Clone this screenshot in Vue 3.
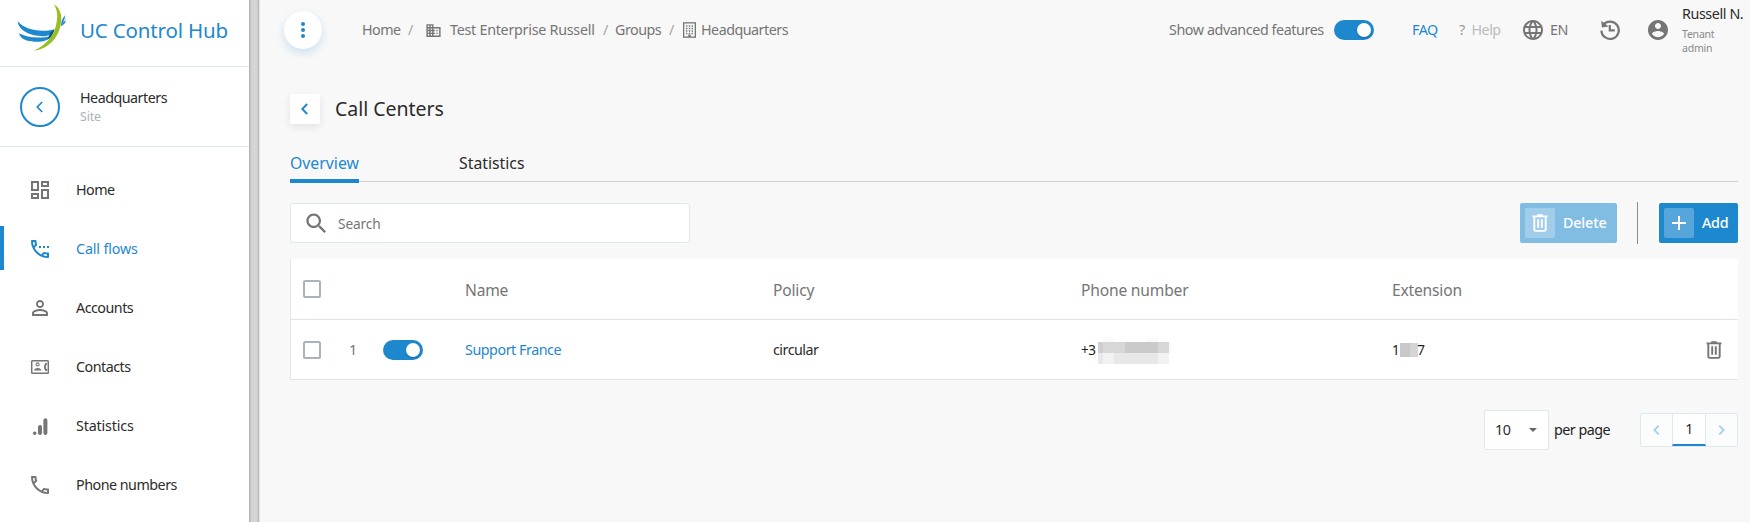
<script setup>
const phone =
  'M6.54 5c.06.89.21 1.76.45 2.59l-1.2 1.2c-.41-1.2-.67-2.47-.76-3.79h1.51m9.86 12.02c.85.24 1.72.39 2.6.45v1.49c-1.32-.09-2.59-.35-3.8-.75l1.2-1.19M7.5 3H4c-.55 0-1 .45-1 1 0 9.39 7.61 17 17 17 .55 0 1-.45 1-1v-3.49c0-.55-.45-1-1-1-1.24 0-2.45-.2-3.57-.57-.1-.04-.21-.05-.31-.05-.26 0-.51.1-.71.29l-2.2 2.2c-2.83-1.45-5.15-3.76-6.59-6.59l2.2-2.2c.28-.28.36-.67.25-1.02C8.7 6.45 8.5 5.25 8.5 4c0-.55-.45-1-1-1z'
const nav = [
  { label: 'Home', path: 'M19 5v2h-4V5h4M9 5v6H5V5h4m10 8v6h-4v-6h4M9 17v2H5v-2h4M21 3h-8v6h8V3zM11 3H3v10h8V3zm10 8h-8v10h8V11zm-10 4H3v6h8v-6z' },
  { label: 'Call flows', path: phone + 'M11 9h2v2h-2zM15 9h2v2h-2zM19 9h2v2h-2z', active: true },
  { label: 'Accounts', path: 'M12 5.9c1.16 0 2.1.94 2.1 2.1s-.94 2.1-2.1 2.1S9.9 9.16 9.9 8s.94-2.1 2.1-2.1m0 9c2.97 0 6.1 1.46 6.1 2.1v1.1H5.9V17c0-.64 3.13-2.1 6.1-2.1M12 4C9.79 4 8 5.79 8 8s1.79 4 4 4 4-1.79 4-4-1.79-4-4-4zm0 9c-2.67 0-8 1.34-8 4v3h16v-3c0-2.66-5.33-4-8-4z' },
  { label: 'Contacts', contact: true },
  { label: 'Statistics', wide: true, path: 'M6.7 17.4a1.8 1.8 0 1 0 .01 0zM10 13a2 2 0 0 1 4 0v6a2 2 0 0 1-4 0zM15.4 6.2a2 2 0 0 1 4 0V19a2 2 0 0 1-4 0z' },
  { label: 'Phone numbers', path: phone },
]
const domain =
  'M12 7V3H2v18h20V7H12zM6 19H4v-2h2v2zm0-4H4v-2h2v2zm0-4H4V9h2v2zm0-4H4V5h2v2zm4 12H8v-2h2v2zm0-4H8v-2h2v2zm0-4H8V9h2v2zm0-4H8V5h2v2zm10 12h-8v-2h2v-2h-2v-2h2v-2h-2V9h8v10zm-2-8h-2v2h2v-2zm0 4h-2v2h2v-2z'
const globe =
  'M11.99 2C6.47 2 2 6.48 2 12s4.47 10 9.99 10C17.52 22 22 17.52 22 12S17.52 2 11.99 2zm6.93 6h-2.95c-.32-1.25-.78-2.45-1.38-3.56 1.84.63 3.37 1.91 4.33 3.56zM12 4.04c.83 1.2 1.48 2.53 1.91 3.96h-3.82c.43-1.43 1.08-2.76 1.91-3.96zM4.26 14C4.1 13.36 4 12.69 4 12s.1-1.36.26-2h3.38c-.08.66-.14 1.32-.14 2s.06 1.34.14 2H4.26zm.82 2h2.95c.32 1.25.78 2.45 1.38 3.56-1.84-.63-3.37-1.9-4.33-3.56zm2.95-8H5.08c.96-1.66 2.49-2.93 4.33-3.56C8.81 5.55 8.35 6.75 8.03 8zM12 19.96c-.83-1.2-1.48-2.53-1.91-3.96h3.82c-.43 1.43-1.08 2.76-1.91 3.96zM14.34 14H9.66c-.09-.66-.16-1.32-.16-2s.07-1.35.16-2h4.68c.09.65.16 1.32.16 2s-.07 1.34-.16 2zm.25 5.56c.6-1.11 1.06-2.31 1.38-3.56h2.95c-.96 1.65-2.49 2.93-4.33 3.56zM16.36 14c.08-.66.14-1.32.14-2s-.06-1.34-.14-2h3.38c.16.64.26 1.31.26 2s-.1 1.36-.26 2h-3.38z'
const account =
  'M12 2C6.48 2 2 6.48 2 12s4.48 10 10 10 10-4.48 10-10S17.52 2 12 2zm0 3c1.66 0 3 1.34 3 3s-1.34 3-3 3-3-1.34-3-3 1.34-3 3-3zm0 14.2c-2.5 0-4.71-1.28-6-3.22.03-1.99 4-3.08 6-3.08 1.99 0 5.97 1.09 6 3.08-1.29 1.94-3.5 3.22-6 3.22z'
const search =
  'M15.5 14h-.79l-.28-.27C15.41 12.59 16 11.11 16 9.5 16 5.91 13.09 3 9.5 3S3 5.91 3 9.5 5.91 16 9.5 16c1.61 0 3.09-.59 4.23-1.57l.27.28v.79l5 4.99L20.49 19l-4.99-5zm-6 0C7.01 14 5 11.99 5 9.5S7.01 5 9.5 5 14 7.01 14 9.5 11.99 14 9.5 14z'
</script>

<template>
  <div class="app">
    <aside class="side">
      <div class="brand">
        <svg class="logo" viewBox="48 10 156 148">
          <path fill="#1e88cf" d="M53 65C72 88 118 101 163 89C161 101 152 107 139 109C102 113 56 97 53 65Z" />
          <path fill="#1e88cf" d="M57 101C82 115 122 118 157 108C148 121 129 127 104 126C81 125 61 119 57 101Z" />
          <path fill="#1e88cf" d="M195 47L194 58L183 80C183 67 187 57 195 47ZM198 62C197 70 191 76 183 80L190 67Z" />
          <path fill="#15507c" d="M163 89C161 103 154 113 143 119L151 99Z" />
          <path fill="#97bf1f" d="M161 14C181 24 188 49 182 77C174 114 147 148 102 153C136 137 158 113 167 81C175 53 173 30 161 14Z" />
        </svg>
        <span class="brand-name">UC Control Hub</span>
      </div>
      <div class="site">
        <span class="back-ring">
          <svg width="8" height="12" viewBox="0 0 8 12"><path d="M6.2 1L1.3 6L6.2 11" fill="none" stroke="#1e88cf" stroke-width="1.7" /></svg>
        </span>
        <div class="site-text"><div class="site-name">Headquarters</div><div class="site-kind">Site</div></div>
      </div>
      <nav class="nav">
        <a v-for="n in nav" :key="n.label" class="nav-item" :class="{ active: n.active, wide: n.wide }">
          <svg v-if="n.contact" width="24" height="24" viewBox="0 0 24 24">
            <rect x="3.7" y="5.7" width="16.6" height="12.6" rx=".8" fill="none" stroke="currentColor" stroke-width="1.5" />
            <circle cx="9.6" cy="9.4" r="1.5" fill="none" stroke="currentColor" stroke-width="1.1" />
            <path d="M6 15.6c0-3.4 7.4-3.4 7.4 0zM18.6 7.8l-1.2.1a7 7 0 0 0 0 8.1h1.4l.5-1.4-1.2-1a5 5 0 0 1 0-3.2l1.1-1.1z" fill="currentColor" />
          </svg>
          <svg v-else width="24" height="24" viewBox="0 0 24 24"><path :d="n.path" fill="currentColor" /></svg>
          <span>{{ n.label }}</span>
        </a>
      </nav>
    </aside>
    <div class="gutter"></div>
    <main class="main">
      <header class="top">
        <span class="menu"><svg width="6" height="18" viewBox="0 0 6 18"><circle cx="3" cy="3" r="2" /><circle cx="3" cy="9" r="2" /><circle cx="3" cy="15" r="2" /></svg></span>
        <span class="c-home">Home</span>
        <span class="slash">/</span>
        <svg class="c-domain" width="17" height="17" viewBox="0 0 24 24"><path :d="domain" fill="currentColor" /></svg>
        <span class="c-ent">Test Enterprise Russell</span>
        <span class="slash">/</span>
        <span class="c-groups">Groups</span>
        <span class="slash">/</span>
        <svg class="c-build" width="13" height="16" viewBox="0 0 13 16">
          <rect x=".65" y=".85" width="11.7" height="14.3" fill="none" stroke="currentColor" stroke-width="1.3" />
          <path d="M3 4h7M3 6.5h7M3 9h7M3 11.5h7" stroke="currentColor" stroke-width="1.3" stroke-dasharray="1.4 1.4" />
          <path d="M5.3 12.5h2.4V15H5.3z" fill="currentColor" />
        </svg>
        <span class="c-hq">Headquarters</span>
        <div class="right">
          <span class="r-adv">Show advanced features</span>
          <span class="toggle"><i></i></span>
          <span class="r-faq">FAQ</span>
          <span class="r-q">?</span>
          <span class="r-help">Help</span>
          <svg width="24" height="24" viewBox="0 0 24 24"><path :d="globe" fill="currentColor" /></svg>
          <span class="r-en">EN</span>
          <svg width="24" height="24" viewBox="0 0 24 24">
            <path d="M5 7.2A8.7 8.7 0 1 1 3.4 12.6M11.8 7v5.4h5" fill="none" stroke="currentColor" stroke-width="2.2" />
            <path d="M3.2 2.8L4 9.4l6.6-.8z" fill="currentColor" />
          </svg>
          <svg class="r-acc" width="24" height="24" viewBox="0 0 24 24"><path :d="account" fill="currentColor" /></svg>
          <div class="user"><b>Russell N.</b><small>Tenant</small><small>admin</small></div>
        </div>
      </header>
      <section class="content">
        <div class="title-row">
          <span class="back-box"><svg width="8" height="12" viewBox="0 0 8 12"><path d="M6.2 1L1.3 6L6.2 11" fill="none" stroke="#1e88cf" stroke-width="2" /></svg></span>
          <h1>Call Centers</h1>
        </div>
        <div class="tabs"><span class="tab on">Overview</span><span class="tab">Statistics</span></div>
        <div class="tools">
          <div class="search"><svg width="27" height="27" viewBox="0 0 24 24"><path :d="search" fill="#757575" /></svg><span>Search</span></div>
          <button class="btn del"><span class="ico"><svg width="16" height="18" viewBox="0 0 16 18"><path d="M.5 2.4h15M5.2 1.2h5.6M2.3 2.5v13q0 1.4 1.4 1.4h8.6q1.4 0 1.4-1.4v-13M6.2 5.2v8.6M9.8 5.2v8.6" fill="none" stroke="currentColor" stroke-width="1.9" /></svg></span><span>Delete</span></button>
          <span class="divider"></span>
          <button class="btn add"><span class="ico"><svg width="14" height="14" viewBox="0 0 14 14"><path d="M7 0v14M0 7h14" stroke="#fff" stroke-width="2" /></svg></span><span>Add</span></button>
        </div>
        <div class="table">
          <div class="row head">
            <span class="check"></span><span></span><span></span><span>Name</span><span>Policy</span><span>Phone number</span><span>Extension</span><span></span>
          </div>
          <div class="row">
            <span class="check"></span><span class="num">1</span><span class="toggle"><i></i></span>
            <span class="link">Support France</span><span>circular</span>
            <span class="masked">+3<svg class="mask-phone" width="74" height="28" viewBox="0 0 74 28">
              <path fill="#fafafa" d="M5 0h11v5H5zM49 0h11v5H49zM71 5h5v11h-5z" />
              <path fill="#cfcfcf" d="M0 5h71v11H0z" /><path fill="#d7d7d7" d="M5 5h11v11H5zM16 5h11v11H16zM60 5h11v11H60z" /><path fill="#cacaca" d="M27 5h33v11H27z" />
              <path fill="#e8e8e8" d="M0 16h60v11H0z" /><path fill="#f2f2f2" d="M5 16h11v11H5zM60 16h11v11H60z" />
            </svg></span>
            <span class="masked">1<svg class="mask-ext" width="18" height="14" viewBox="0 0 18 14"><path fill="#c8c8c8" d="M0 0h10v14H0z" /><path fill="#d5d5d5" d="M10 0h8v14h-8z" /></svg>7</span>
            <span class="trash"><svg width="16" height="18" viewBox="0 0 16 18"><path d="M.5 2.4h15M5.2 1.2h5.6M2.3 2.5v13q0 1.4 1.4 1.4h8.6q1.4 0 1.4-1.4v-13M6.2 5.2v8.6M9.8 5.2v8.6" fill="none" stroke="currentColor" stroke-width="1.9" /></svg></span>
          </div>
        </div>
        <div class="pager">
          <div class="select"><span>10</span><svg width="8" height="4" viewBox="0 0 8 4"><path d="M0 0h8L4 4z" fill="#666" /></svg></div>
          <span class="per">per page</span>
          <div class="pages">
            <span><svg width="7" height="10" viewBox="0 0 7 10"><path d="M5.7.7L1.4 5L5.7 9.3" fill="none" stroke="#a9d0ec" stroke-width="1.9" /></svg></span>
            <span class="cur">1</span>
            <span><svg width="7" height="10" viewBox="0 0 7 10"><path d="M1.3.7L5.6 5L1.3 9.3" fill="none" stroke="#a9d0ec" stroke-width="1.9" /></svg></span>
          </div>
        </div>
      </section>
    </main>
  </div>
</template>

<style>
body { margin: 0; overflow: hidden; }
</style>

<style scoped>
* { box-sizing: border-box; }
svg { display: block; flex: none; }
.app { display: flex; width: 1750px; height: 522px; overflow: hidden; background: #f8f8f8; font: 14.3px/20px "Noto Sans", "Open Sans", sans-serif; letter-spacing: -.035em; color: #2b2b2b; white-space: nowrap; }
.side { width: 249px; flex: none; background: #fff; }
.brand { height: 67px; border-bottom: 1px solid #dfe8ee; display: flex; padding: 3px 0 0 16px; }
.logo { width: 52px; height: 49.3px; }
.brand-name { margin-left: 12px; font-size: 20.5px; line-height: 54px; letter-spacing: -.008em; color: #1e88cf; }
.site { height: 80px; border-bottom: 1px solid #dfe8ee; display: flex; align-items: center; padding-left: 20px; }
.back-ring { width: 40px; height: 40px; border: 2px solid #1e88cf; border-radius: 50%; display: flex; align-items: center; justify-content: center; }
.site-text { margin-left: 20px; }
.site-name { line-height: 20px; }
.site-kind { font-size: 12.3px; line-height: 18px; letter-spacing: -.01em; color: #a8b4ba; }
.nav { padding-top: 13px; }
.nav-item { height: 59px; display: flex; align-items: center; padding-left: 28px; }
.nav-item svg { color: #757575; margin-right: 24px; }
.nav-item.active { color: #1e88cf; letter-spacing: -.01em; background: linear-gradient(#1e88cf, #1e88cf) 0 7px / 4px 44px no-repeat; }
.nav-item.active svg { color: #1e88cf; }
.nav-item.wide span { letter-spacing: -.012em; }
.gutter { width: 10px; flex: none; background: linear-gradient(90deg, #adadad, #cfcfcf 2px, #d6d6d6 4px, #d6d6d6 7px, #c8c8c8 9px, #aaa 10px); }
.main { flex: 1; min-width: 0; box-shadow: inset 1px 0 1px #e4e4e4; }
.top { display: flex; align-items: center; height: 60px; padding-left: 25px; color: #757575; }
.menu { width: 38px; height: 38px; border-radius: 50%; background: #fff; box-shadow: 0 4px 10px rgba(30, 136, 207, .2); display: flex; align-items: center; justify-content: center; fill: #1e88cf; }
.c-home { width: 46px; margin-left: 40px; }
.slash { width: 6px; color: #a5a5a5; }
.c-domain { margin-left: 11px; }
.c-ent { margin-left: 8px; width: 153px; letter-spacing: -.018em; }
.c-groups { margin-left: 6px; width: 54px; }
.c-build { margin-left: 8px; }
.c-hq { margin-left: 5px; }
.right { display: flex; align-items: center; margin-left: auto; height: 60px; width: 581px; flex: none; }
.r-adv { width: 165px; letter-spacing: -.029em; }
.toggle { width: 40px; height: 20px; border-radius: 10px; background: #1e88cf; padding: 3px; display: flex; justify-content: flex-end; }
.toggle i { width: 14px; height: 14px; border-radius: 50%; background: #fff; box-shadow: 0 1px 2px rgba(0, 0, 0, .25); }
.r-faq { margin-left: 38px; width: 47px; color: #1e88cf; }
.r-q { width: 12.5px; color: #999; }
.r-help { width: 49.5px; color: #bcbcbc; }
.r-en { margin-left: 5px; width: 48px; }
.r-acc { margin-left: 24px; }
.user { margin-left: 12px; align-self: flex-start; padding-top: 4px; display: flex; flex-direction: column; }
.user b { font-weight: 400; color: #2b2b2b; line-height: 20px; padding-bottom: 3px; letter-spacing: -.028em; }
.user small { font-size: 10.5px; line-height: 14px; color: #8a8a8a; letter-spacing: -.02em; }
.content { padding: 34px 12px 0 31px; }
.title-row { display: flex; align-items: center; height: 30px; }
.back-box { width: 30px; height: 30px; border-radius: 2px; background: #fff; box-shadow: 0 3px 8px rgba(0, 0, 0, .09); display: flex; align-items: center; justify-content: center; }
h1 { margin: 0 0 0 15px; font-size: 19.5px; font-weight: 400; line-height: 30px; letter-spacing: -.002em; }
.tabs { margin-top: 24px; height: 35px; display: flex; gap: 100px; font-size: 15.8px; letter-spacing: 0; background: linear-gradient(#cfd2d4, #cfd2d4) 0 33px / 100% 1px no-repeat; }
.tab { line-height: 31px; height: 35px; }
.tab.on { width: 69px; color: #1e88cf; border-bottom: 4px solid #1e88cf; }
.tools { margin-top: 20px; display: flex; align-items: center; height: 40px; }
.search { width: 400px; height: 40px; border: 1px solid #dfe8ee; border-radius: 3px; background: #fff; display: flex; align-items: center; padding-left: 12px; color: #757575; font-size: 13.7px; letter-spacing: -.01em; margin-right: auto; }
.search span { margin-left: 8px; padding-top: 2px; }
.btn { height: 40px; border: 0; border-radius: 2px; background: #1e88cf; color: #fff; font: 500 14.3px/20px "Noto Sans", sans-serif; letter-spacing: -.02em; padding: 0 0 0 5px; display: flex; align-items: center; gap: 8px; }
.ico { width: 30px; height: 30px; border-radius: 2px; background: rgba(255, 255, 255, .25); display: flex; align-items: center; justify-content: center; }
.del { width: 97px; background: #81bde3; letter-spacing: -.01em; }
.add { width: 79px; }
.divider { width: 1px; height: 42px; background: #8c8c8c; margin: 0 21px 0 20px; }
.table { margin-top: 16px; background: #fff; border-left: 1px solid #dfe8ee; }
.row { display: grid; grid-template-columns: 46px 34px 82px 308px 308px 311px 314px 32px; padding-left: 12px; height: 60px; align-items: center; border-bottom: 1px solid #dfe4ec; }
.row.head { height: 61px; font-size: 15.6px; letter-spacing: -.012em; color: #757575; }
.row.head span { padding-top: 2px; }
.check { width: 18px; height: 18px; border: 2px solid #a9b4ba; border-radius: 2px; }
.num { color: #757575; }
.link { color: #1e88cf; letter-spacing: -.032em; }
.masked { display: flex; align-items: center; color: #222; font-size: 13.5px; }
.mask-phone { margin: 2px 0 0 3px; }
.mask-ext { margin: 0 -1px 0 1px; }
.trash { color: #757575; }
.pager { margin-top: 30px; height: 40px; display: flex; align-items: center; justify-content: flex-end; }
.select { width: 65px; height: 40px; border: 1px solid #dfe8ee; border-radius: 2px; background: #fff; display: flex; align-items: center; justify-content: space-between; padding: 0 11px 0 10px; }
.per { margin-left: 5px; width: 86px; color: #222; }
.pages { width: 98px; height: 34px; border: 1px solid #dfe8ee; border-radius: 2px; background: #fbfcfc; display: grid; grid-template-columns: 31px 34px 31px; }
.pages span { display: flex; align-items: center; justify-content: center; }
.pages .cur { background: #fff; border: 1px solid #dfe8ee; border-width: 0 1px 2px; border-bottom-color: #1e88cf; }
</style>
